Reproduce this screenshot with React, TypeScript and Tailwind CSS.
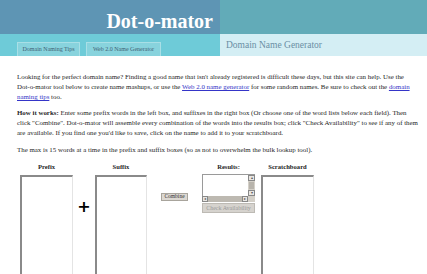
import React from 'react';

const serif = { fontFamily: '"Liberation Serif", "Times New Roman", serif' };

const TextBox: React.FC = () => (
  <div className="h-[120px] w-full border-l-2 border-t-2 border-l-[#8a8a8a] border-t-[#8a8a8a] border-r border-b border-r-[#e4e4e4] border-b-[#e4e4e4] bg-white" />
);

const ResultsBox: React.FC = () => (
  <div className="flex w-full flex-col">
    <div className="flex h-[22px] border-l border-t border-[#9a9a9a] bg-white">
      <div className="flex-1" />
      <div className="flex w-[7px] flex-col bg-[#d4d0c8]">
        <div className="flex h-[6px] items-center justify-center border border-[#888] bg-[#e8e6e2] text-[4px] leading-none text-[#555]">▴</div>
        <div className="mx-[1px] my-[1px] flex-1 bg-[#b8b4ac]" />
        <div className="flex h-[6px] items-center justify-center border border-[#888] bg-[#e8e6e2] text-[4px] leading-none text-[#555]">▾</div>
      </div>
    </div>
    <div className="flex h-[6px]">
      <div className="flex flex-1 bg-[#bdb9b1]">
        <div className="flex w-[6px] items-center justify-center border border-[#888] bg-[#e8e6e2] text-[4px] leading-none text-[#555]">◂</div>
        <div className="flex-1" />
        <div className="flex w-[6px] items-center justify-center border border-[#888] bg-[#e8e6e2] text-[4px] leading-none text-[#555]">▸</div>
      </div>
      <div className="w-[7px] bg-[#d4d0c8]" />
    </div>
    <button className="mt-[1px] h-[10px] w-full border border-[#bdbab4] bg-[#d6d3ce] text-[6px] leading-none text-[#9a9a9a]">
      Check Availability
    </button>
  </div>
);

export default function App() {
  return (
    <div className="h-[274px] w-[427px] overflow-hidden bg-white text-[#262626]" style={serif}>
      {/* header */}
      <div className="flex">
        <div className="flex w-[220px] flex-col">
          <div className="flex h-[34px] items-end justify-end bg-[#5e95b4] pb-[3px] pr-[7px]">
            <h1 className="text-[20px] font-bold leading-none text-white">Dot-o-mator</h1>
          </div>
          <div className="flex h-[22px] items-end gap-[6px] bg-[#6ecbd8] pl-[17px]">
            <div className="flex h-[14px] w-[63px] items-center justify-center border border-b-0 border-[#a9dfe6] bg-[#88d3dd] text-[6px] text-[#3f5f74]">
              Domain Naming Tips
            </div>
            <div className="flex h-[14px] w-[75px] items-center justify-center border border-b-0 border-[#a9dfe6] bg-[#88d3dd] text-[6px] text-[#3f5f74]">
              Web 2.0 Name Generator
            </div>
          </div>
        </div>
        <div className="flex flex-1 flex-col">
          <div className="h-[34px] bg-[#62abb8]" />
          <div className="flex h-[22px] items-center bg-[#d4eef4] pl-[6px] text-[9.5px] text-[#6b8fa4]">
            Domain Name Generator
          </div>
        </div>
      </div>

      {/* intro */}
      <div className="pl-[17px] pr-[4px] pt-[16px] text-[6.9px] leading-[10px]">
        <p>
          Looking for the perfect domain name? Finding a good name that isn't already registered is difficult these
          days, but this site can help. Use the
          <br />
          Dot-o-mator tool below to create name mashups, or use the{' '}
          <a className="text-[#3535c8] underline">Web 2.0 name generator</a> for some random names. Be sure to check
          out the <a className="text-[#3535c8] underline">domain</a>
          <br />
          <a className="text-[#3535c8] underline">naming tips</a> too.
        </p>
        <p className="mt-[6px]">
          <b>How it works:</b> Enter some prefix words in the left box, and suffixes in the right box (Or choose one
          of the word lists below each field). Then
          <br />
          click "Combine". Dot-o-mator will assemble every combination of the words into the results box; click
          "Check Availability" to see if any of them
          <br />
          are available. If you find one you'd like to save, click on the name to add it to your scratchboard.
        </p>
        <p className="mt-[7px]">
          The max is 15 words at a time in the prefix and suffix boxes (so as not to overwhelm the bulk lookup tool).
        </p>
      </div>

      {/* tool */}
      <div className="flex pl-[20px] pt-[7px] text-[6.6px] leading-[10px]">
        <div className="flex w-[53px] flex-col items-center">
          <div className="mb-[3px] font-bold">Prefix</div>
          <TextBox />
        </div>
        <div className="flex w-[22px] justify-center pt-[37px]">
          <span className="text-[16px] font-bold leading-none text-black" style={{ fontFamily: '"DejaVu Sans", sans-serif' }}>+</span>
        </div>
        <div className="flex w-[52px] flex-col items-center">
          <div className="mb-[3px] font-bold">Suffix</div>
          <TextBox />
        </div>
        <div className="flex w-[55px] justify-center pt-[31px]">
          <button className="h-[8px] w-[27px] border border-[#a8a49c] bg-[#dcd8d2] text-[5.5px] leading-none text-[#333]">
            Combine
          </button>
        </div>
        <div className="flex w-[53px] flex-col items-center">
          <div className="mb-[2px] font-bold">Results:</div>
          <ResultsBox />
        </div>
        <div className="ml-[6px] flex w-[53px] flex-col items-center">
          <div className="mb-[3px] font-bold">Scratchboard</div>
          <TextBox />
        </div>
      </div>
    </div>
  );
}
